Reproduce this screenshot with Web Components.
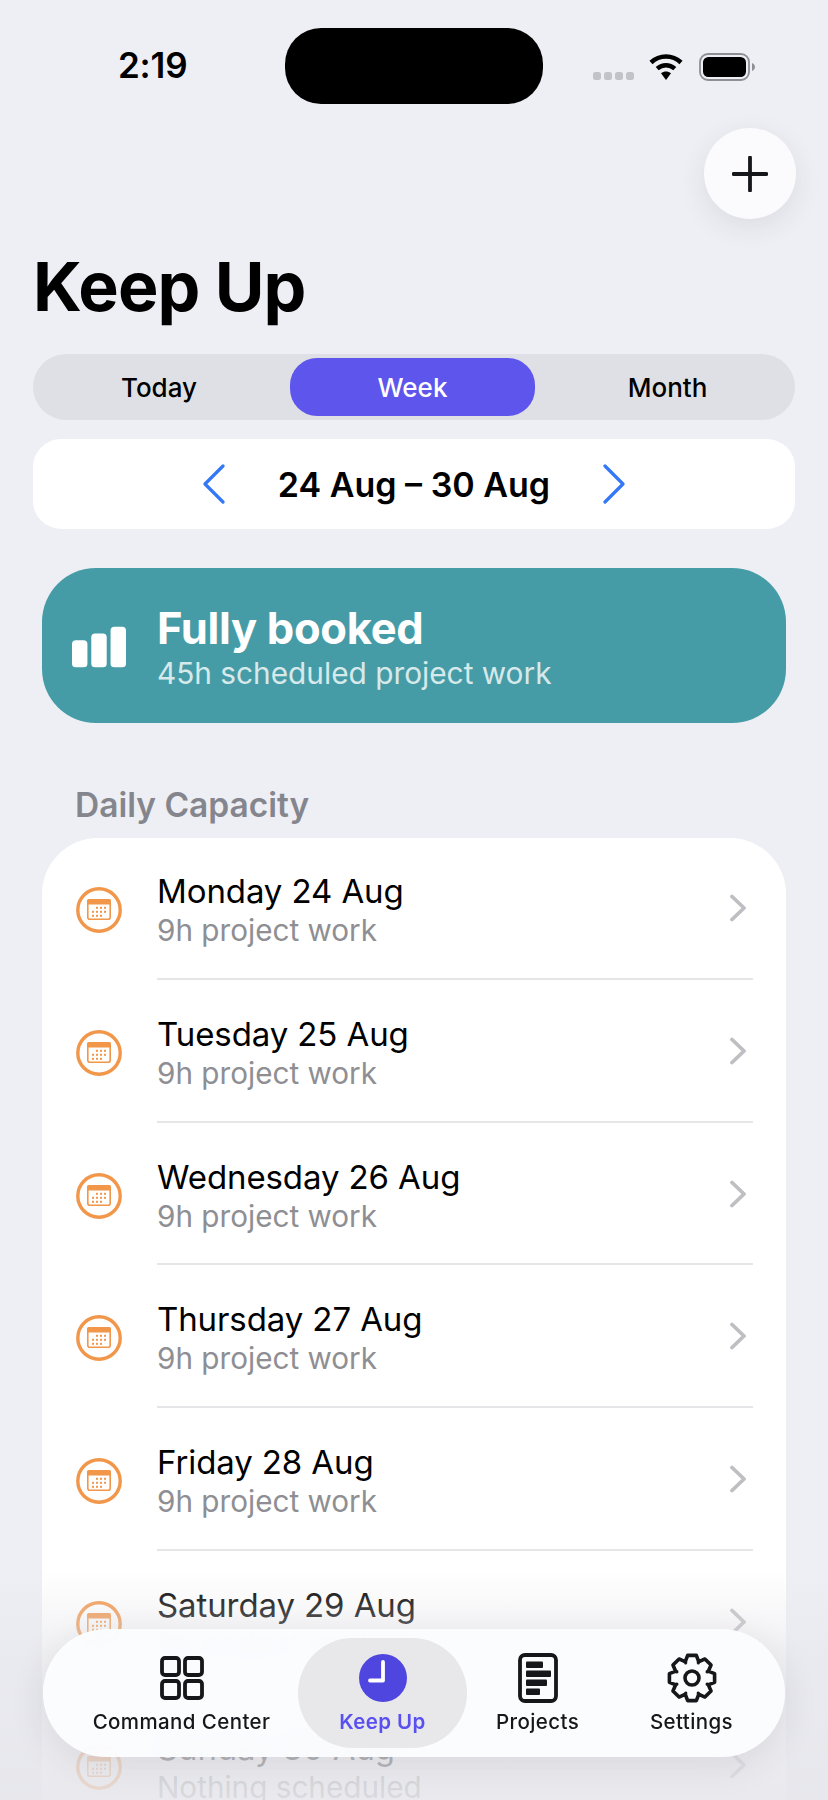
<!DOCTYPE html>
<html lang="en">
<head>
<meta charset="utf-8">
<title>Keep Up</title>
<style>
html, body { margin: 0; padding: 0; background: #eeeff4; }
body { font-family: Inter, "Noto Sans", sans-serif; color: #000; }
</style>
</head>
<body>
<app-screen>
  <status-bar time="2:19"></status-bar>
  <add-button></add-button>
  <page-title>Keep Up</page-title>
  <segment-control options='["Today","Week","Month"]' selected="1"></segment-control>
  <date-nav>24 Aug – 30 Aug</date-nav>
  <capacity-banner heading="Fully booked" detail="45h scheduled project work"></capacity-banner>
  <section-label>Daily Capacity</section-label>
  <day-list>
    <day-row day="Monday 24 Aug" note="9h project work"></day-row>
    <day-row day="Tuesday 25 Aug" note="9h project work"></day-row>
    <day-row day="Wednesday 26 Aug" note="9h project work"></day-row>
    <day-row day="Thursday 27 Aug" note="9h project work"></day-row>
    <day-row day="Friday 28 Aug" note="9h project work"></day-row>
    <day-row day="Saturday 29 Aug" note="9h project work"></day-row>
    <day-row day="Sunday 30 Aug" note="Nothing scheduled" last></day-row>
  </day-list>
  <tab-bar slot="overlay">
    <tab-item label="Command Center" icon="grid" style="padding-left:13px"></tab-item>
    <tab-item label="Keep Up" icon="clock" active></tab-item>
    <tab-item label="Projects" icon="doc" style="padding-left:1px"></tab-item>
    <tab-item label="Settings" icon="gear"></tab-item>
  </tab-bar>
</app-screen>

<script>
// small helper so every element gets an open shadow root from a string
function shadow(el, html) {
  el.attachShadow({ mode: 'open' }).innerHTML = html;
}

class AppScreen extends HTMLElement {
  constructor() {
    super();
    shadow(this, `
<style>
:host { display: block; position: relative; width: 828px; height: 1800px; overflow: hidden; }
.fade {
  position: absolute; left: 0; right: 0; top: 1570px; bottom: 0;
  background: linear-gradient(to bottom, rgba(230,230,235,0), rgba(230,230,235,.55) 35%, rgba(230,230,235,.86));
}
</style>
<slot></slot>
<div class="fade"></div>
<slot name="overlay"></slot>`);
  }
}

class StatusBar extends HTMLElement {
  constructor() {
    super();
    shadow(this, `
<style>
:host { display: grid; grid-template-columns: 285px 258px 1fr; padding-top: 28px; height: 76px; }
.time { font-size: 35px; font-weight: 600; line-height: 75px; padding-left: 118px; letter-spacing: -.2px; }
.island { background: #000; border-radius: 36px; }
.right { display: flex; align-items: flex-start; padding: 25px 0 0 50px; }
.dots { display: flex; gap: 3.500px; margin-top: 19px; }
.dots i { width: 7.500px; height: 8px; border-radius: 2.500px; background: #c2c3c8; }
.wifi { margin-left: 15.500px; }
.batt { margin-left: 16px; }
</style>
<div class="time"></div>
<div class="island"></div>
<div class="right">
  <div class="dots"><i></i><i></i><i></i><i></i></div>
  <svg class="wifi" width="34" height="27" viewBox="0 0 34 27">
    <path d="M2 9.500C10.500 1.500 23.500 1.500 32 9.500" fill="none" stroke="#000" stroke-width="4.500"/>
    <path d="M8.200 15.600C13.500 11 20.500 11 25.800 15.600" fill="none" stroke="#000" stroke-width="4.500"/>
    <path d="M12 20.200C15 17.800 19 17.800 22 20.200L17 27Z" fill="#000"/>
  </svg>
  <svg class="batt" width="56" height="28" viewBox="0 0 56 28">
    <rect x="1" y="1" width="49" height="26" rx="8" fill="none" stroke="#8e8f94" stroke-width="1.800"/>
    <rect x="4" y="4" width="43" height="20" rx="5.500" fill="#000"/>
    <path d="M53 10C55 11 56 12.500 56 14C56 15.500 55 17 53 18Z" fill="#8e8f94"/>
  </svg>
</div>`);
  }
  connectedCallback() {
    this.shadowRoot.querySelector('.time').textContent = this.getAttribute('time');
  }
}

class AddButton extends HTMLElement {
  constructor() {
    super();
    shadow(this, `
<style>
:host { display: flex; justify-content: flex-end; padding: 24px 32px 0 0; }
.btn {
  width: 92px; height: 91px; border-radius: 50%; background: #fbfbfe;
  display: flex; align-items: center; justify-content: center;
  box-shadow: 0 8px 28px rgba(40,40,60,.09);
}
</style>
<div class="btn">
  <svg width="36" height="36" viewBox="0 0 36 36"><path d="M18 1.500V34.500M1.500 18H34.500" stroke="#16171b" stroke-width="3.800" stroke-linecap="round"/></svg>
</div>`);
  }
}

class PageTitle extends HTMLElement {
  constructor() {
    super();
    shadow(this, `
<style>
:host { display: block; height: 135px; padding-left: 33px; box-sizing: border-box; font-size: 68px; font-weight: 700; line-height: 134px; letter-spacing: -.9px; }
</style>
<slot></slot>`);
  }
}

class SegmentControl extends HTMLElement {
  constructor() {
    super();
    shadow(this, `
<style>
:host { display: grid; grid-template-columns: 257px 245px 1fr; margin: 0 33px; height: 66px; padding: 4px 0; box-sizing: border-box; background: #dfe0e5; border-radius: 33px; }
div { display: flex; align-items: center; justify-content: center; font-size: 26px; font-weight: 450; }
div:first-of-type { padding-right: 5px; }
div:last-of-type { padding-left: 5px; }
div.on { background: #5e56ec; color: #fff; border-radius: 27px; }
</style>`);
  }
  connectedCallback() {
    const selected = Number(this.getAttribute('selected'));
    JSON.parse(this.getAttribute('options')).forEach((option, i) => {
      const d = document.createElement('div');
      d.textContent = option;
      if (i === selected) d.className = 'on';
      this.shadowRoot.appendChild(d);
    });
  }
}

class DateNav extends HTMLElement {
  constructor() {
    super();
    const chev = (d) => `<svg width="24" height="40" viewBox="0 0 24 40"><path d="${d}" fill="none" stroke="#3478f6" stroke-width="3.200" stroke-linecap="round" stroke-linejoin="round"/></svg>`;
    shadow(this, `
<style>
:host { display: flex; align-items: center; justify-content: center; gap: 51px; margin: 19px 33px 0; height: 90px; background: #fff; border-radius: 28px; font-size: 34px; font-weight: 600; }
span { width: 274px; text-align: center; white-space: nowrap; }
</style>
${chev('M21 2L3 20L21 38')}<span><slot></slot></span>${chev('M3 2L21 20L3 38')}`);
  }
}

class CapacityBanner extends HTMLElement {
  constructor() {
    super();
    shadow(this, `
<style>
:host { display: flex; align-items: center; margin: 39px 42px 0; height: 155px; padding-left: 30px; box-sizing: border-box; background: #469ca6; border-radius: 54px; color: #fff; }
svg { margin-top: 3px; }
.text { margin-left: 31px; }
.h { font-size: 43.500px; font-weight: 700; line-height: 54px; letter-spacing: -.3px; }
.d { font-size: 29.800px; line-height: 36px; opacity: .78; }
</style>
<svg width="54" height="42" viewBox="0 0 56 42" fill="#fff">
  <rect x="0" y="14" width="16" height="28" rx="4"/>
  <rect x="20" y="7" width="16" height="35" rx="4"/>
  <rect x="40" y="0" width="16" height="42" rx="4"/>
</svg>
<div class="text"><div class="h"></div><div class="d"></div></div>`);
  }
  connectedCallback() {
    this.shadowRoot.querySelector('.h').textContent = this.getAttribute('heading');
    this.shadowRoot.querySelector('.d').textContent = this.getAttribute('detail');
  }
}

class SectionLabel extends HTMLElement {
  constructor() {
    super();
    shadow(this, `
<style>
:host { display: block; height: 115px; padding: 60px 0 0 75px; box-sizing: border-box; font-size: 33.500px; line-height: 44px; font-weight: 600; color: #85868d; }
</style>
<slot></slot>`);
  }
}

class DayList extends HTMLElement {
  constructor() {
    super();
    shadow(this, `
<style>
:host { display: block; margin: 0 42px; background: #fff; border-radius: 56px 56px 0 0; height: 962px; overflow: hidden; }
</style>
<slot></slot>`);
  }
}

class DayRow extends HTMLElement {
  constructor() {
    super();
    let dots = '';
    // the little date grid inside the calendar glyph
    [[21, 25, 29], [17, 21, 25, 29], [17, 21, 25]].forEach((row, r) => {
      row.forEach((x) => { dots += `<rect x="${x - 1}" y="${19.8 + r * 4}" width="2" height="2"/>`; });
    });
    shadow(this, `
<style>
:host { display: grid; grid-template-columns: 34px 46px 35px 1fr 40px; height: 142.750px; box-sizing: border-box; padding-top: 49px; position: relative; }
svg.cal { grid-column: 2; }
.text { grid-column: 4; margin-top: -15px; }
.t { font-size: 33px; line-height: 39px; letter-spacing: -.1px; color: #000; }
.n { font-size: 29.700px; line-height: 37px; color: #8e8e93; margin-top: 1px; }
.chev { grid-column: 5; margin: 7px 0 0 -17px; }
.rule { position: absolute; left: 115px; right: 33px; bottom: 1px; height: 2px; background: #e6e6e9; }
:host([last]) .rule { display: none; }
</style>
<svg class="cal" width="46" height="46" viewBox="0 0 46 46" fill="#f2964a">
  <circle cx="23" cy="23" r="21.200" fill="none" stroke="#f2964a" stroke-width="3.400"/>
  <rect x="11.800" y="12.800" width="22.400" height="19.400" rx="2" fill="none" stroke="#f2964a" stroke-width="1.600"/>
  <path d="M11 14C11 12.900 11.900 12 13 12H33C34.100 12 35 12.900 35 14V17.500H11Z"/>
  ${dots}
</svg>
<div class="text"><div class="t"></div><div class="n"></div></div>
<svg class="chev" width="18" height="28" viewBox="0 0 18 28"><path d="M3 2.500L15 14L3 25.500" fill="none" stroke="#bfbfc3" stroke-width="3.800" stroke-linecap="round" stroke-linejoin="round"/></svg>
<div class="rule"></div>`);
  }
  connectedCallback() {
    this.shadowRoot.querySelector('.t').textContent = this.getAttribute('day');
    this.shadowRoot.querySelector('.n').textContent = this.getAttribute('note');
  }
}

class TabBar extends HTMLElement {
  constructor() {
    super();
    shadow(this, `
<style>
:host {
  position: absolute; left: 43px; top: 1629px; width: 742px; height: 128px; box-sizing: border-box;
  display: grid; grid-template-columns: 246px 169px 140px 169px; padding: 9px;
  background: rgba(251,252,254,.96); border-radius: 64px;
  -webkit-backdrop-filter: blur(10px); backdrop-filter: blur(10px);
  box-shadow: 0 8px 36px rgba(40,40,60,.1);
}
</style>
<slot></slot>`);
  }
}

// gear outline: 8 rounded teeth around the hub
function gearPath(cx, cy) {
  const pts = [];
  for (let i = 0; i < 8; i++) {
    const a = (i * Math.PI) / 4 - Math.PI / 2;
    [[-0.4, 17.5], [-0.19, 23], [0.19, 23], [0.4, 17.5]].forEach(([o, r]) => {
      pts.push([cx + r * Math.cos(a + o), cy + r * Math.sin(a + o)]);
    });
  }
  // round the valleys by bending between teeth
  let d = 'M' + pts[0][0].toFixed(2) + ' ' + pts[0][1].toFixed(2);
  for (let i = 1; i <= pts.length; i++) {
    const p = pts[i % pts.length];
    if (i % 4 === 0) {
      const a = ((i / 4 - 0.5) * Math.PI) / 4 - Math.PI / 2;
      d += `Q${(cx + 15.5 * Math.cos(a)).toFixed(2)} ${(cy + 15.5 * Math.sin(a)).toFixed(2)} ${p[0].toFixed(2)} ${p[1].toFixed(2)}`;
    } else {
      d += `L${p[0].toFixed(2)} ${p[1].toFixed(2)}`;
    }
  }
  return d + 'Z';
}

const TAB_ICONS = {
  grid: `<svg width="44" height="44" viewBox="0 0 44 44" fill="none" stroke="#16171b" stroke-width="3.800">
    <rect x="2" y="2" width="17" height="17" rx="3"/><rect x="25" y="2" width="17" height="17" rx="3"/>
    <rect x="2" y="25" width="17" height="17" rx="3"/><rect x="25" y="25" width="17" height="17" rx="3"/></svg>`,
  clock: `<svg width="48" height="48" viewBox="0 0 48 48"><circle cx="24" cy="24" r="24" fill="#4f46e0"/>
    <path d="M24 8V26.500H11" fill="none" stroke="#fff" stroke-width="3.800" stroke-linecap="round" stroke-linejoin="round"/></svg>`,
  doc: `<svg width="40" height="50" viewBox="0 0 40 50"><rect x="2" y="2" width="36" height="46" rx="5" fill="none" stroke="#16171b" stroke-width="3.800"/>
    <g fill="#16171b"><rect x="8" y="8.500" width="17" height="6.500" rx="1"/><rect x="8" y="17.500" width="25" height="6.500" rx="1"/>
    <rect x="8" y="26.500" width="21" height="6.500" rx="1"/><rect x="8" y="35.500" width="14" height="6.500" rx="1"/></g></svg>`,
  gear: `<svg width="50" height="50" viewBox="0 0 50 50" fill="none" stroke="#16171b" stroke-width="3.600" stroke-linejoin="round">
    <path d="${gearPath(25, 25)}"/><circle cx="25" cy="25" r="7"/></svg>`
};

class TabItem extends HTMLElement {
  constructor() {
    super();
    shadow(this, `
<style>
:host { display: flex; flex-direction: column; align-items: center; box-sizing: border-box; border-radius: 55px; height: 110px; }
:host([active]) { background: #e8e8eb; }
.ic { height: 50px; margin-top: 15px; display: flex; align-items: center; justify-content: center; }
.l { margin-top: 6px; font-size: 20.500px; line-height: 26px; font-weight: 500; letter-spacing: .4px; color: #16171b; white-space: nowrap; }
:host([active]) .l { color: #5a50f0; font-weight: 600; }
</style>
<div class="ic"></div><div class="l"></div>`);
  }
  connectedCallback() {
    this.shadowRoot.querySelector('.ic').innerHTML = TAB_ICONS[this.getAttribute('icon')];
    this.shadowRoot.querySelector('.l').textContent = this.getAttribute('label');
  }
}

customElements.define('app-screen', AppScreen);
customElements.define('status-bar', StatusBar);
customElements.define('add-button', AddButton);
customElements.define('page-title', PageTitle);
customElements.define('segment-control', SegmentControl);
customElements.define('date-nav', DateNav);
customElements.define('capacity-banner', CapacityBanner);
customElements.define('section-label', SectionLabel);
customElements.define('day-list', DayList);
customElements.define('day-row', DayRow);
customElements.define('tab-bar', TabBar);
customElements.define('tab-item', TabItem);
</script>
</body>
</html>
